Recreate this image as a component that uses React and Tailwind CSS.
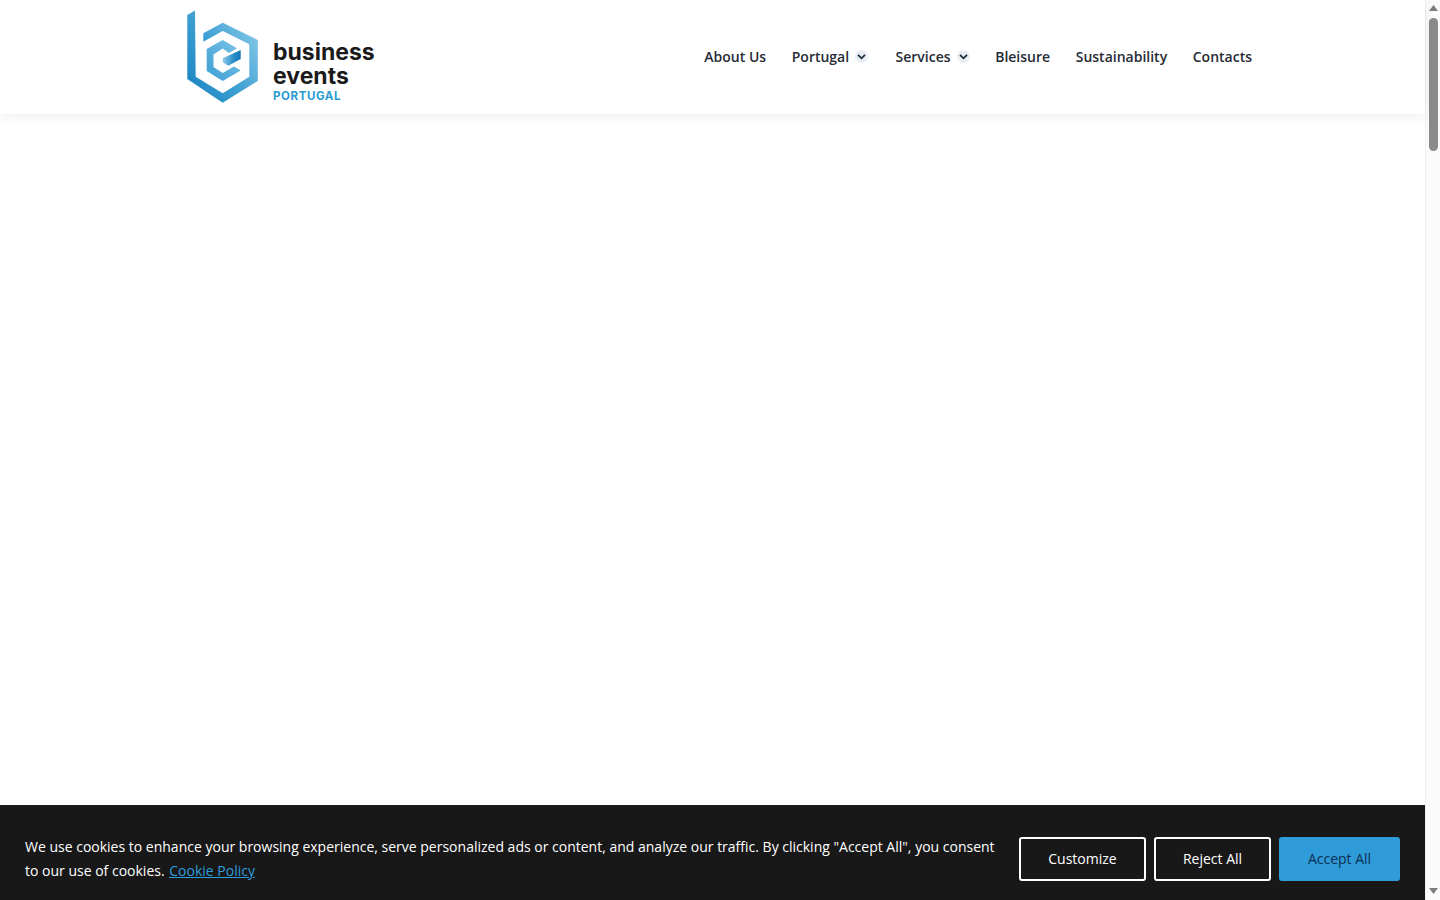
import React from "react";

function Logo() {
  return (
    <svg width="73" height="96" viewBox="187 9 73 96" className="shrink-0">
      <defs>
        <linearGradient id="outer" x1="0" y1="1" x2="1" y2="0.2">
          <stop offset="0" stopColor="#1480bd" />
          <stop offset="0.5" stopColor="#3d9fd3" />
          <stop offset="1" stopColor="#86c8e8" />
        </linearGradient>
        <linearGradient id="inner" x1="0" y1="1" x2="1" y2="0">
          <stop offset="0" stopColor="#3c9fd5" />
          <stop offset="1" stopColor="#7cc3e6" />
        </linearGradient>
        <linearGradient id="bar" x1="0" y1="0.5" x2="1" y2="0.5">
          <stop offset="0" stopColor="#8fcbe9" />
          <stop offset="0.6" stopColor="#2a8fc9" />
          <stop offset="1" stopColor="#1277b4" />
        </linearGradient>
      </defs>
      <polygon
        fill="url(#outer)"
        points="195,10.6 187.3,15 187.3,79 222.7,102.8 257.8,81 257.8,40 222.7,22.7 203.3,33.3 203.3,41.7 222.7,31 249.3,44.3 249.3,76.7 222.7,93.3 195.7,76.7"
      />
      <polygon
        fill="url(#inner)"
        points="222.7,40 206.7,49 206.7,71 222.7,81 240.7,70.5 234,66.5 222.7,73 213.5,67 213.5,54.5 222.7,48.5 229,53 237,48.3"
      />
      <polygon fill="url(#bar)" points="222.7,58.3 240.7,50 240.7,59 228.3,65.7 222.7,62.3" />
    </svg>
  );
}

function Chevron() {
  return (
    <span className="ml-[6px] flex h-[13px] w-[13px] items-center justify-center rounded-full bg-[#e9eef5]">
      <svg width="9" height="9" viewBox="0 0 9 9" fill="none">
        <path d="M1 2.8 4.5 6.3 8 2.8" stroke="#1a2a3a" strokeWidth="1.7" />
      </svg>
    </span>
  );
}

function Triangle({ down }) {
  return (
    <svg width="9" height="6" viewBox="0 0 9 6" className="block">
      <polygon fill="#7c7c7c" points={down ? "0,0 9,0 4.5,6" : "0,6 9,6 4.5,0"} />
    </svg>
  );
}

export default function App() {
  return (
    <div className="flex h-screen overflow-hidden bg-white font-['Open_Sans',sans-serif] text-[14px]">
      <div className="flex min-w-0 flex-1 flex-col">
        <header className="relative z-10 flex h-[114px] items-center justify-between pl-[187px] pr-[173px] shadow-[0_2px_12px_rgba(0,0,0,0.07)]">
          <div className="flex items-center gap-[13px]">
            <Logo />
            <div className="mt-[28px] flex flex-col font-['Inter',sans-serif] text-[#1b1b1b]">
              <span className="text-[23px] font-bold leading-[24px]">business</span>
              <span className="text-[23px] font-bold leading-[24px]">events</span>
              <span className="mt-[1px] text-[11.5px] font-bold leading-[14px] tracking-[0.6px] text-[#2a9bd0]">PORTUGAL</span>
            </div>
          </div>
          <nav className="-mt-[1px] flex items-center font-semibold text-[#262b35]">
            <a className="mr-[25.6px]">About Us</a>
            <a className="mr-[27.4px] flex items-center">Portugal<Chevron /></a>
            <a className="mr-[25.6px] flex items-center">Services<Chevron /></a>
            <a className="mr-[25.6px]">Bleisure</a>
            <a className="mr-[25.6px]">Sustainability</a>
            <a>Contacts</a>
          </nav>
        </header>
        <main className="flex-1" />
        <div className="flex h-[95px] items-center gap-[24px] bg-[#181818] pl-[25px] pr-[25px] pt-[13px] text-white">
          <p className="min-w-0 flex-1 leading-[24px]">
            We use cookies to enhance your browsing experience, serve personalized ads or content, and analyze our traffic. By clicking "Accept All", you consent to our use of cookies.{" "}
            <a className="ml-[1px] text-[#2d9cdb] underline">Cookie Policy</a>
          </p>
          <div className="flex shrink-0 gap-[8px]">
            <button className="h-[44px] w-[127px] rounded-[3px] border-2 border-white pb-[2px]">Customize</button>
            <button className="h-[44px] w-[117px] rounded-[3px] border-2 border-white pb-[2px]">Reject All</button>
            <button className="h-[44px] w-[121px] rounded-[3px] bg-[#2f9bd8] pb-[2px] text-[#0b2f4f]">Accept All</button>
          </div>
        </div>
      </div>
      <div className="flex w-[15px] shrink-0 flex-col items-center border-l border-[#f0f0f0] bg-[#fbfbfb] pb-[6px] pt-[5px]">
        <Triangle />
        <div className="mt-[7px] h-[133px] w-[9px] rounded-full bg-[#8a8a8a]" />
        <div className="flex-1" />
        <Triangle down />
      </div>
    </div>
  );
}
